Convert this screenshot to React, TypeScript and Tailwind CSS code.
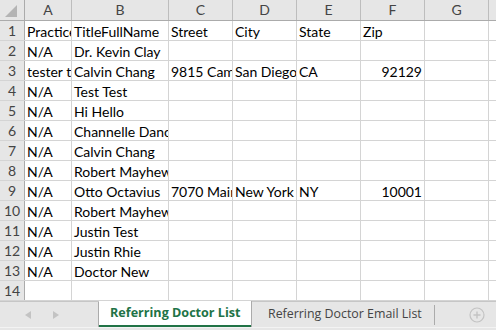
import React from "react";

const cols = [
  { key: "A", w: "w-[47px]" },
  { key: "B", w: "w-[97px]" },
  { key: "C", w: "w-[64px]" },
  { key: "D", w: "w-[64px]" },
  { key: "E", w: "w-[64px]" },
  { key: "F", w: "w-[64px]" },
  { key: "G", w: "w-[64px]" },
];

type Row = (string | null)[];

const rows: Row[] = [
  ["PracticeName", "TitleFullName", "Street", "City", "State", "Zip"],
  ["N/A", "Dr. Kevin Clay"],
  ["tester test", "Calvin Chang", "9815 Camino Ruiz", "San Diego", "CA", "92129"],
  ["N/A", "Test Test"],
  ["N/A", "Hi Hello"],
  ["N/A", "Channelle Dance", ""],
  ["N/A", "Calvin Chang"],
  ["N/A", "Robert Mayhew", ""],
  ["N/A", "Otto Octavius", "7070 Main St", "New York", "NY", "10001"],
  ["N/A", "Robert Mayhew", ""],
  ["N/A", "Justin Test"],
  ["N/A", "Justin Rhie"],
  ["N/A", "Doctor New"],
  [],
];

function Cell({ w, value, right }: { w: string; value?: string | null; right?: boolean }) {
  return (
    <div
      className={`${w} shrink-0 h-full border-r border-[#d4d4d4] overflow-hidden whitespace-nowrap px-[2px] pt-[1px] leading-[19px] ${
        right ? "text-right" : ""
      }`}
    >
      {value}
    </div>
  );
}

export default function App() {
  return (
    <div
      className="w-[496px] h-[330px] overflow-hidden bg-white flex flex-col text-black"
      style={{ fontFamily: "Lato, 'Open Sans', sans-serif" }}
    >
      {/* column headers */}
      <div className="flex h-[21px] shrink-0 bg-[#e6e6e6] border-b border-[#ababab] text-[14px] text-[#444]">
        <div className="w-[25px] shrink-0 border-r border-[#ababab] relative">
          <svg width="14" height="14" className="absolute right-[6px] bottom-[2px]">
            <polygon points="13,1 13,13 1,13" fill="#b4b4b4" />
          </svg>
        </div>
        {cols.map((c) => (
          <div
            key={c.key}
            className={`${c.w} shrink-0 border-r border-[#bdbdbd] text-center leading-[20px]`}
          >
            {c.key}
          </div>
        ))}
        <div className="flex-1" />
      </div>

      {/* rows */}
      <div className="flex flex-col text-[14px]">
        {rows.map((r, i) => (
          <div key={i} className="flex h-[20px] border-b border-[#d4d4d4]">
            <div className="w-[25px] shrink-0 bg-[#e6e6e6] border-r border-[#ababab] text-center text-[#444] leading-[19px]">
              {i + 1}
            </div>
            {cols.map((c, j) => (
              <Cell key={c.key} w={c.w} value={r[j]} right={j === 5 && i > 0} />
            ))}
            <div className="flex-1" />
          </div>
        ))}
      </div>

      {/* sheet tabs */}
      <div
        className="flex-1 flex flex-col bg-[#e6e6e6] border-t border-[#c6c6c6]"
        style={{ fontFamily: "'Open Sans', sans-serif" }}
      >
        <div className="flex h-[25px]">
          <div className="w-[99px] shrink-0 flex items-center gap-[22px] pl-[25px] border-r border-[#ababab]">
            <svg width="6" height="8"><polygon points="6,0 6,8 0,4" fill="#c3c3c3" /></svg>
            <svg width="6" height="8"><polygon points="0,0 0,8 6,4" fill="#c3c3c3" /></svg>
          </div>
          <div className="-mt-px w-[153px] shrink-0 bg-white border-r border-[#ababab] flex flex-col">
            <div className="flex-1 flex items-center pl-[11px] text-[12.6px] font-bold text-[#217346]">
              Referring Doctor List
            </div>
            <div className="h-[2px] bg-[#217346]" />
          </div>
          <div className="flex items-center pl-[16px] pr-[12px] text-[12.4px] text-[#444]">
            Referring Doctor Email List
          </div>
          <div className="w-px h-[20px] mt-[3px] bg-[#ababab]" />
          <div className="flex-1 flex items-center pl-[34px]">
            <svg width="16" height="16" viewBox="0 0 16 16">
              <circle cx="8" cy="8" r="7" fill="none" stroke="#c3c3c3" strokeWidth="1.2" />
              <path d="M8 4.5v7M4.5 8h7" stroke="#c3c3c3" strokeWidth="1.4" />
            </svg>
          </div>
        </div>
        <div className="h-px bg-[#f3f3f3]" />
      </div>
    </div>
  );
}
